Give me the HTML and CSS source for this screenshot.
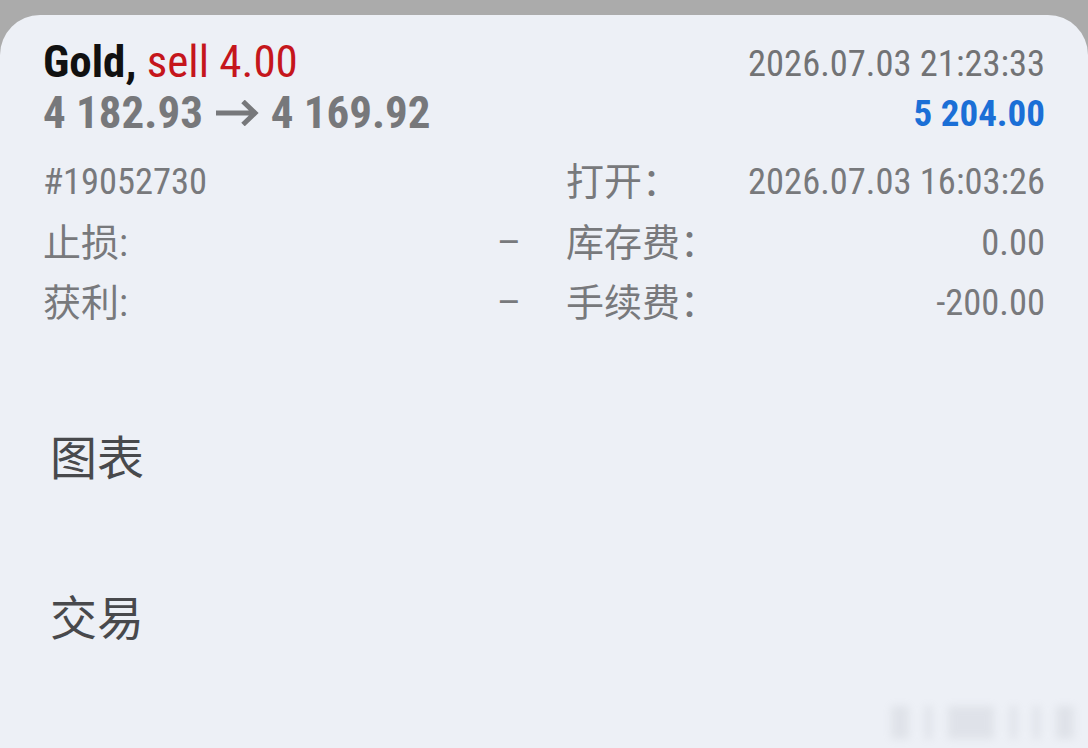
FILE: index.html
```html
<!DOCTYPE html>
<html lang="zh-CN">
<head>
  <meta charset="UTF-8" />
  <meta name="viewport" content="width=device-width, initial-scale=1.0"/>
  <title>Gold sell 4.00</title>
  <link rel="stylesheet" href="styles.css">
</head>
<body>

  <div class="sheet">
    <div class="order-head">
      <div class="head-left">
        <div class="symbol"><span class="symbol-name">Gold,</span> <span class="symbol-type">sell 4.00</span></div>
        <div class="prices">4 182.93 <svg class="arrow" width="44" height="26" viewBox="0 0 44 26"><path d="M1 13H41M28 1.5L40 13L28 24.5" fill="none" stroke="currentColor" stroke-width="5"/></svg> 4 169.92</div>
      </div>
      <div class="head-right">
        <div class="close-time">2026.07.03 21:23:33</div>
        <div class="profit">5 204.00</div>
      </div>
    </div>

    <div class="order-details">
      <div class="detail-row">
        <span class="detail-label">#19052730</span>
        <span class="detail-value"></span>
      </div>
      <div class="detail-row">
        <span class="detail-label cjk">打开：</span>
        <span class="detail-value">2026.07.03 16:03:26</span>
      </div>
      <div class="detail-row">
        <span class="detail-label cjk">止损:</span>
        <span class="detail-value dash">&ndash;</span>
      </div>
      <div class="detail-row">
        <span class="detail-label cjk">库存费：</span>
        <span class="detail-value">0.00</span>
      </div>
      <div class="detail-row">
        <span class="detail-label cjk">获利:</span>
        <span class="detail-value dash">&ndash;</span>
      </div>
      <div class="detail-row">
        <span class="detail-label cjk">手续费：</span>
        <span class="detail-value">-200.00</span>
      </div>
    </div>

    <ul class="sheet-menu">
      <li>图表</li>
      <li>交易</li>
    </ul>

    <div class="mark">
      <span class="w2"></span><span class="w1"></span><span class="w3"></span><span class="w1"></span><span class="w1"></span><span class="w2"></span>
    </div>
  </div>

</body>
</html>
```

FILE: styles.css
```css
body {
  margin: 0;
  padding: 15px 0 0;
  background: #ababab;
  font-family: "Roboto Condensed", "Liberation Sans Narrow", Roboto, "Noto Sans CJK SC", sans-serif;
  overflow: hidden;
}

.sheet {
  position: relative;
  height: 733px;
  background: #edf0f6;
  border-radius: 40px 40px 0 0;
  padding: 22px 43px 0;
  box-sizing: border-box;
}

.order-head {
  display: flex;
  justify-content: space-between;
}

.symbol {
  font-size: 45px;
  line-height: 50px;
}

.symbol-name {
  font-weight: bold;
  color: #111;
}

.symbol-type {
  color: #c5161c;
}

.prices {
  font-size: 45px;
  line-height: 52px;
  font-weight: bold;
  color: #77787b;
}

.prices .arrow {
  vertical-align: 2px;
  margin: 0 1px 0 2px;
}

.head-right {
  text-align: right;
}

.close-time {
  font-size: 36.5px;
  line-height: 54px;
  color: #727375;
}

.profit {
  font-size: 37px;
  line-height: 46px;
  font-weight: bold;
  color: #1b6fd6;
}

.order-details {
  display: grid;
  grid-template-columns: 1fr 1fr;
  column-gap: 44px;
  margin-top: 13px;
}

.detail-row {
  display: flex;
  justify-content: space-between;
  font-size: 36.5px;
  line-height: 60.5px;
  color: #78797c;
}

.detail-label.cjk {
  font-size: 38px;
}

.detail-value.dash {
  font-family: Roboto, sans-serif;
  padding-right: 1px;
}

.sheet-menu {
  list-style: none;
  margin: 41px 0 0;
  padding: 0 0 0 7px;
}

.sheet-menu li {
  font-family: "Noto Sans CJK SC", sans-serif;
  font-size: 47px;
  line-height: 160px;
  color: #48494c;
}

/* faint blurred stamp in the corner */
.mark {
  position: absolute;
  right: 14px;
  bottom: 9px;
  display: flex;
  gap: 16px;
  filter: blur(4px);
  opacity: 0.16;
}

.mark span {
  height: 33px;
  background: #9a9ea8;
}

.mark .w1 {
  width: 7px;
}

.mark .w2 {
  width: 18px;
}

.mark .w3 {
  width: 46px;
}
```
